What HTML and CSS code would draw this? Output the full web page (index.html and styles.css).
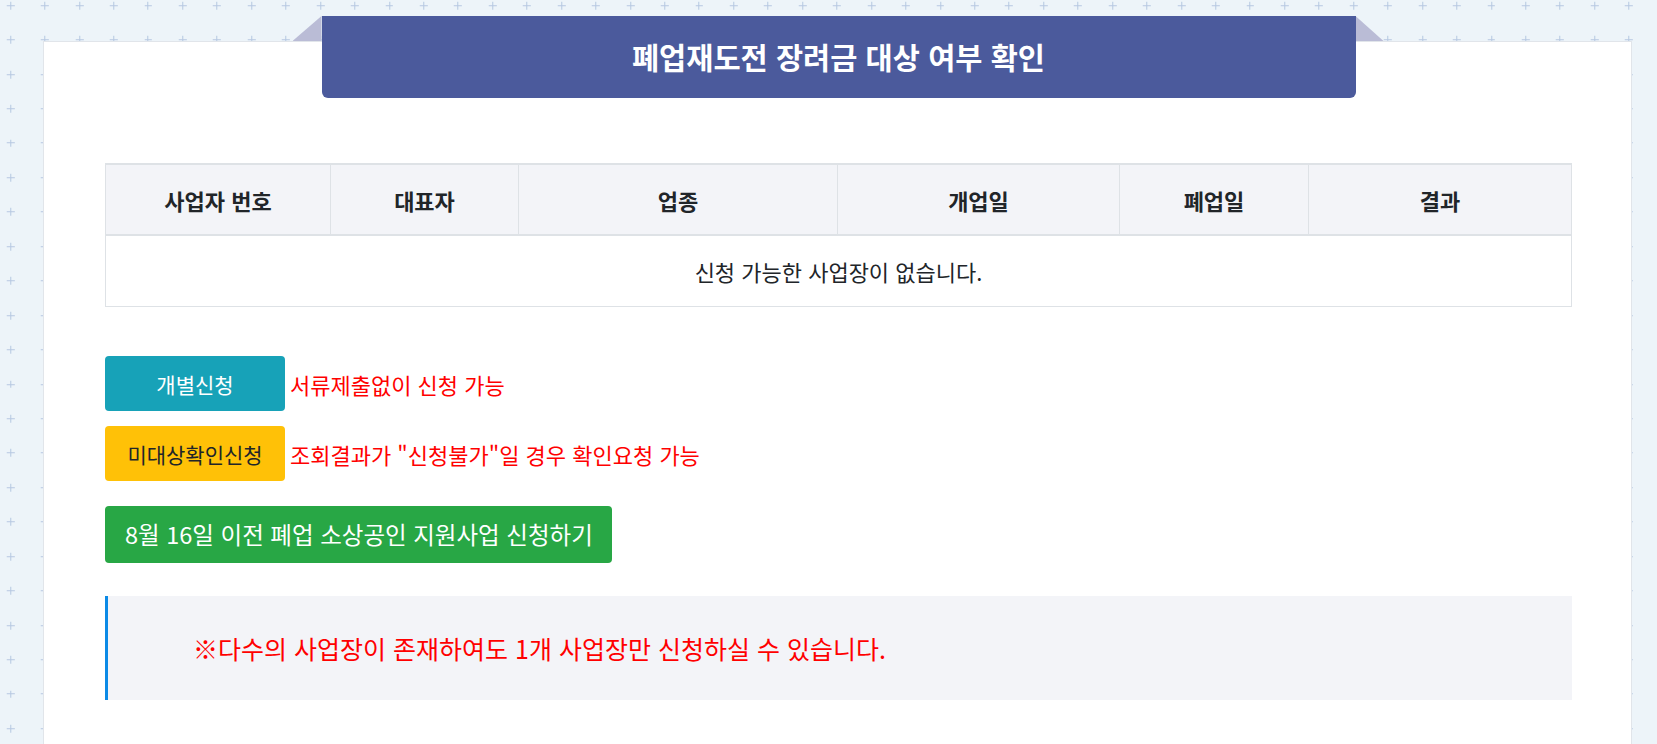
FILE: index.html
```html
<!DOCTYPE html>
<html lang="ko">
<head>
  <meta charset="UTF-8">
  <meta name="viewport" content="width=device-width, initial-scale=1">
  <title>폐업재도전 장려금 대상 여부 확인</title>
  <link rel="stylesheet" href="styles.css">
</head>
<body>
  <div class="page">
    <div class="card">
      <!-- 제목 탭 -->
      <h1 class="card-title">폐업재도전 장려금 대상 여부 확인</h1>

      <!-- 조회 결과 -->
      <table class="result-table">
        <thead>
          <tr>
            <th class="col-no">사업자 번호</th>
            <th class="col-ceo">대표자</th>
            <th class="col-type">업종</th>
            <th class="col-open">개업일</th>
            <th class="col-close">폐업일</th>
            <th class="col-result">결과</th>
          </tr>
        </thead>
        <tbody>
          <tr>
            <td colspan="6">신청 가능한 사업장이 없습니다.</td>
          </tr>
        </tbody>
      </table>

      <!-- 신청 버튼 -->
      <div class="apply-row">
        <button class="btn btn-apply btn-info">개별신청</button>
        <span class="apply-note">서류제출없이 신청 가능</span>
      </div>
      <div class="apply-row">
        <button class="btn btn-apply btn-warning">미대상확인신청</button>
        <span class="apply-note">조회결과가 "신청불가"일 경우 확인요청 가능</span>
      </div>

      <div class="old-apply">
        <button class="btn btn-success">8월 16일 이전 폐업 소상공인 지원사업 신청하기</button>
      </div>

      <!-- 안내 -->
      <div class="notice">
        <p>※다수의 사업장이 존재하여도 1개 사업장만 신청하실 수 있습니다.</p>
      </div>
    </div>
  </div>
</body>
</html>
```

FILE: styles.css
```css
/* 기본 */
html, body {
  margin: 0;
  padding: 0;
}
body {
  font-family: "Noto Sans CJK KR", "Noto Sans", sans-serif;
  color: #212529;
}
/* 배경 (십자 패턴) */
.page {
  height: 100vh;
  overflow: hidden;
  box-sizing: border-box;
  padding: 41px 25px 0 43px;
  background-color: #edf4f9;
  background-image: url("data:image/svg+xml,%3Csvg xmlns='http://www.w3.org/2000/svg' width='34.45' height='34.45'%3E%3Cpath d='M13.5 17.5h8M17.5 13.5v8' stroke='%23b6c8e1' stroke-width='1' fill='none'/%3E%3C/svg%3E");
  background-size: 34.45px 34.45px;
  background-position: -7px -12px;
}
/* 카드 */
.card {
  background: #fff;
  border: 1px solid #e1e5ea;
  padding: 0 59px 60px 61px;
}
/* 제목 탭 */
.card-title {
  position: relative;
  box-sizing: border-box;
  width: 1034px;
  height: 82px;
  margin: -26px auto 0;
  padding-top: 20px;
  background: #4b5a9c;
  border-radius: 0 0 6px 6px;
  color: #fff;
  font-size: 29.5px;
  font-weight: 700;
  line-height: 40px;
  text-align: center;
}
.card-title::before,
.card-title::after {
  content: "";
  position: absolute;
  top: 0;
  width: 29px;
  height: 25px;
  background: #babcd6;
}
.card-title::before {
  left: -29px;
  clip-path: polygon(100% 0, 100% 100%, 0 100%);
}
.card-title::after {
  right: -28px;
  width: 28px;
  clip-path: polygon(0 0, 100% 100%, 0 100%);
}
/* 결과 테이블 */
.result-table {
  width: 100%;
  margin-top: 65px;
  border-collapse: collapse;
  table-layout: fixed;
}
.result-table th,
.result-table td {
  border: 1px solid #dee2e6;
  text-align: center;
  font-size: 22px;
  line-height: 30px;
}
.result-table th {
  padding: 19.5px 8px;
  background: #f3f4f8;
  font-weight: 700;
  border-top-width: 2px;
  border-bottom-width: 2px;
}
.result-table td {
  padding: 20px 8px;
}
.col-no { width: 208px; }
.col-ceo { width: 171px; }
.col-type { width: 302px; }
.col-open { width: 265px; }
.col-close { width: 172px; }
/* 버튼 */
.btn {
  border: 0;
  border-radius: 4px;
  font-family: inherit;
  cursor: pointer;
}
.btn-info {
  background: #17a2b8;
  color: #fff;
}
.btn-warning {
  background: #ffc107;
  color: #212529;
}
.btn-success {
  background: #28a745;
  color: #fff;
}
.apply-row {
  display: flex;
  align-items: center;
  margin-top: 15px;
}
.apply-row:first-of-type {
  margin-top: 49px;
}
.btn-apply {
  width: 180px;
  height: 55px;
  padding: 0;
  font-size: 21px;
}
.apply-note {
  margin-left: 5px;
  color: #ff0000;
  font-size: 22px;
}
.old-apply {
  margin-top: 25px;
}
.old-apply .btn {
  padding: 12px 19px 12px 20px;
  font-size: 23.5px;
  line-height: 33px;
}
/* 안내 문구 */
.notice {
  display: flex;
  align-items: center;
  height: 104px;
  margin-top: 33px;
  padding-left: 85px;
  background: #f3f4f8;
  border-left: 3px solid #0b8ae6;
}
.notice p {
  margin: 0;
  color: #ff0000;
  font-size: 25px;
}
```
